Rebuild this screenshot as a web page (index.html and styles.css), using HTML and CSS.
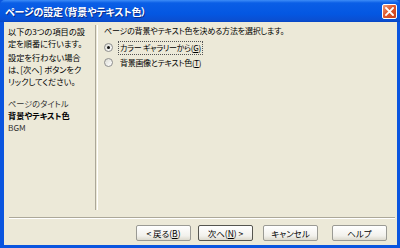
FILE: index.html
```html
<!DOCTYPE html>
<html lang="ja">
    <head>
        <meta charset="UTF-8">
        <title>ページの設定</title>
        <link rel="stylesheet" href="styles.css">
    </head>
    <body>
        <div class="window">
            <div class="titlebar">
                <span class="title">ページの設定（背景やテキスト色）</span>
                <span class="close-btn">
                    <svg width="9" height="9" viewBox="0 0 9 9">
                        <path d="M1 1 L8 8 M8 1 L1 8" stroke="#fff" stroke-width="1.8" stroke-linecap="square"/>
                    </svg>
                </span>
            </div>
            <div class="frame">
                <div class="main">
                    <div class="left">
                        <p class="note">以下の3つの項目の設<br>定を順番に行います。</p>
                        <p class="note">設定を行わない場合<br>は、[次へ] ボタンをク<br>リックしてください。</p>
                        <ul class="steps">
                            <li>ページのタイトル</li>
                            <li class="current">背景やテキスト色</li>
                            <li>BGM</li>
                        </ul>
                    </div>
                    <div class="vsep"></div>
                    <div class="right">
                        <p class="intro">ページの背景やテキスト色を決める方法を選択します。</p>
                        <div class="radio-row">
                            <span class="radio checked"></span>
                            <span class="radio-label focused">カラー ギャラリーから(<u>G</u>)</span>
                        </div>
                        <div class="radio-row">
                            <span class="radio"></span>
                            <span class="radio-label">背景画像とテキスト色(<u>T</u>)</span>
                        </div>
                    </div>
                </div>
                <div class="hsep"></div>
                <div class="buttons">
                    <button class="btn btn-back">&lt; 戻る(<u>B</u>)</button>
                    <button class="btn btn-next default">次へ(<u>N</u>) &gt;</button>
                    <button class="btn btn-cancel">キャンセル</button>
                    <button class="btn btn-help">ヘルプ</button>
                </div>
            </div>
        </div>
    </body>
</html>
```

FILE: styles.css
```css
body {
    margin: 0;
    width: 400px;
    height: 248px;
    overflow: hidden;
    font-family: "Noto Sans CJK JP", "Noto Sans", sans-serif;
    font-feature-settings: "palt";
}

.window {
    width: 400px;
    height: 248px;
    display: flex;
    flex-direction: column;
    background-color: #0a55df;
}

.titlebar {
    height: 22px;
    display: flex;
    align-items: center;
    justify-content: space-between;
    padding: 0 3px 0 5px;
    background: linear-gradient(#3d8cf7 0px, #0a5ee6 3px, #0457e2 14px, #0a4fd2 20px, #0646c4 22px);
    border-radius: 5px 5px 0 0;
}

.title {
    color: white;
    font-weight: bold;
    font-size: 10px;
    letter-spacing: -0.2px;
    text-shadow: 1px 1px 0 #0a2d8a;
}

.close-btn {
    width: 13px;
    height: 13px;
    display: flex;
    align-items: center;
    justify-content: center;
    border: 1px solid white;
    border-radius: 2px;
    background: linear-gradient(135deg, #f0a080 0%, #e0582c 45%, #c8401a 100%);
}

.frame {
    flex-grow: 1;
    display: flex;
    flex-direction: column;
    margin: 0 3px 3px 4px;
    background-color: #ece9d8;
}

.main {
    height: 195px;
    display: flex;
    padding-top: 3px;
    box-sizing: border-box;
}

.left {
    width: 84px;
    padding: 0 3px 0 4px;
    font-size: 8.2px;
    line-height: 12px;
    color: #000;
    white-space: nowrap;
}

.note {
    margin: 0 0 2px 0;
}

.steps {
    list-style: none;
    margin: 10px 0 0 0;
    padding: 0;
}

.steps li {
    color: #333;
}

.steps li.current {
    color: #000;
    font-weight: bold;
}

.vsep {
    width: 1px;
    margin-bottom: 7px;
    border-left: 1px solid #aca899;
    border-right: 1px solid #fff;
}

.right {
    padding-left: 6px;
    font-size: 8px;
    line-height: 12px;
}

.intro {
    margin: 0 0 3px 0;
    letter-spacing: -0.2px;
}

.radio-row {
    display: flex;
    align-items: center;
    height: 15px;
}

.radio {
    width: 7px;
    height: 7px;
    border: 1px solid #8d8d8d;
    border-radius: 50%;
    background: linear-gradient(135deg, #dcdcd4, #ffffff);
    display: flex;
    align-items: center;
    justify-content: center;
    margin-right: 5px;
}

.radio.checked::after {
    content: "";
    width: 3px;
    height: 3px;
    border-radius: 50%;
    background-color: #111;
}

.radio-label {
    padding: 0 1px;
    letter-spacing: -0.3px;
    border: 1px dotted transparent;
}

.radio-label.focused {
    border-color: #555;
}

.hsep {
    margin: 0 2px 0 5px;
    border-top: 1px solid #aca899;
    border-bottom: 1px solid #fff;
}

.buttons {
    display: flex;
    justify-content: flex-end;
    padding: 6px 10px 0 0;
}

.btn {
    width: 55px;
    height: 16px;
    padding: 0;
    font-family: "Noto Sans CJK JP", "Noto Sans", sans-serif;
    font-feature-settings: "palt";
    font-size: 8.5px;
    color: #000;
    background: linear-gradient(#ffffff, #f2f1ec 70%, #dcd9cd);
    border: 1px solid #9a9a94;
    border-radius: 2px;
}

.btn.default {
    border-color: #55554f;
}

.btn-next {
    margin-left: 7px;
}

.btn-cancel {
    margin-left: 10px;
}

.btn-help {
    margin-left: 14px;
}
```
